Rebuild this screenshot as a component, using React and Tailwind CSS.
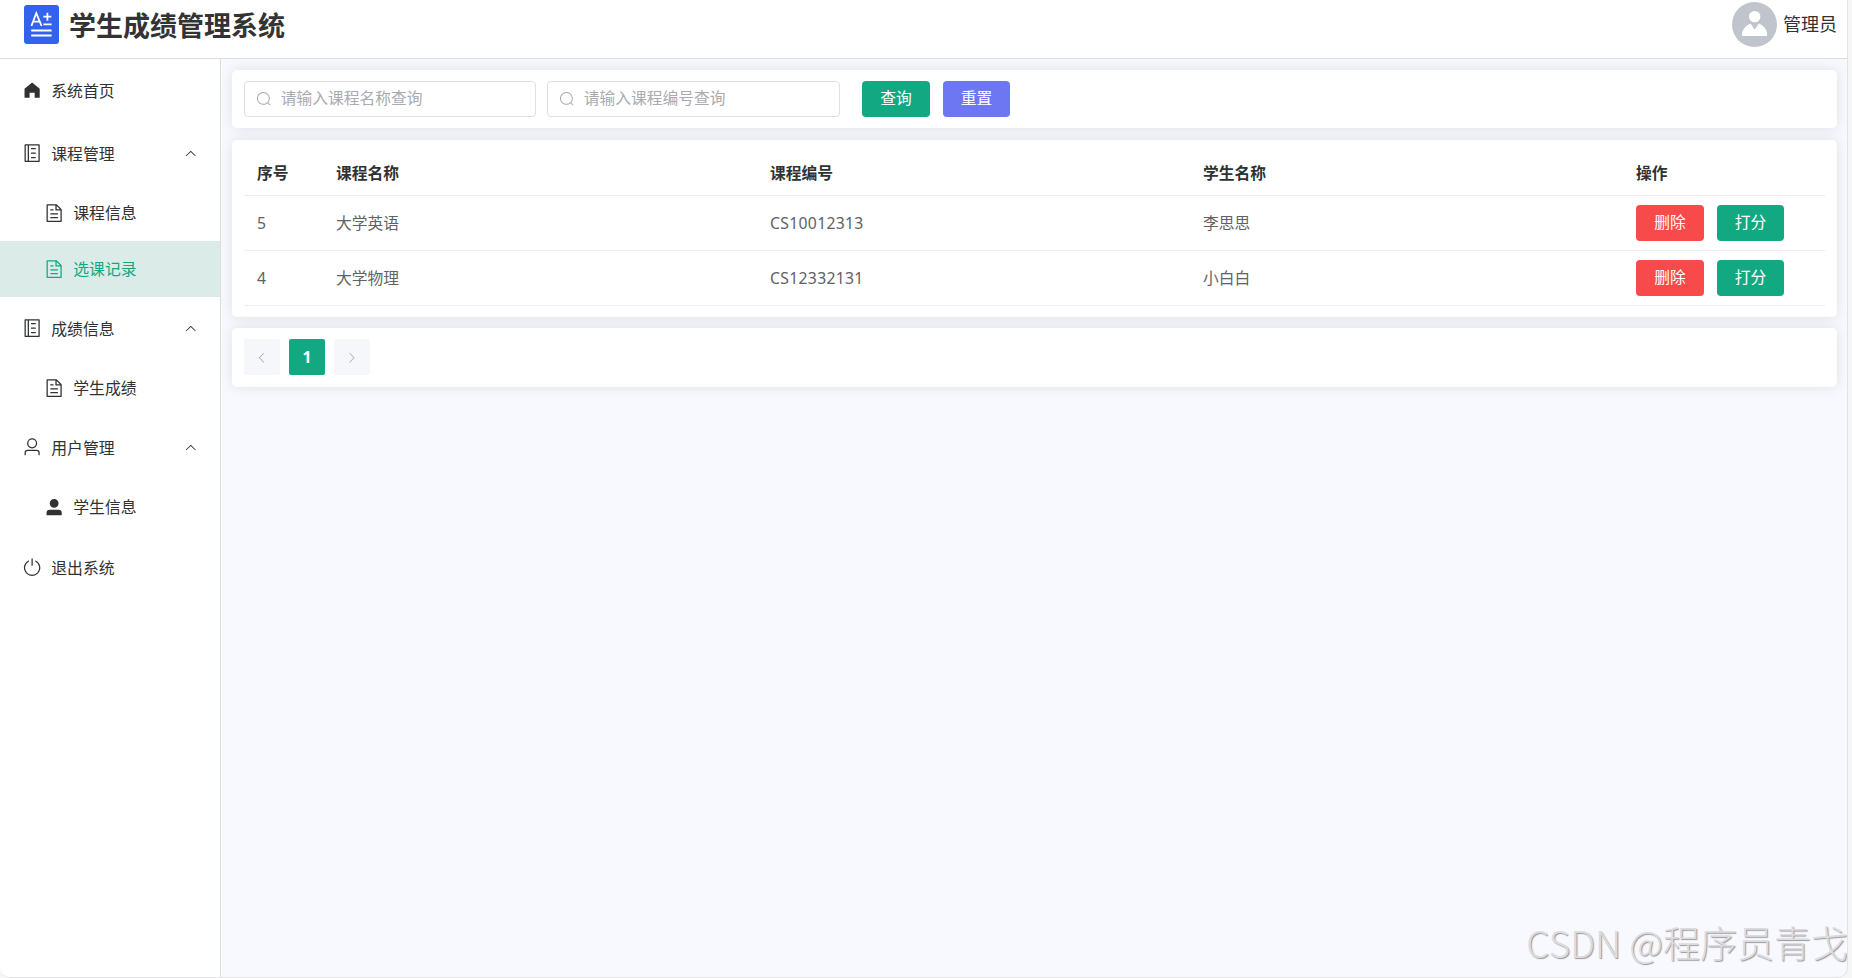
const ICONS = {
  home: ["M512 128 128 447.936V896h255.936V640H640v256h255.936V447.936z"],
  memo: [
    "M160 64h704a32 32 0 0 1 32 32v832a32 32 0 0 1-32 32H160a32 32 0 0 1-32-32V96a32 32 0 0 1 32-32zM192 896h96V128h-96v768zM352 896h480V128H352v768z",
    "M480 256h192a32 32 0 0 1 0 64H480a32 32 0 0 1 0-64zM480 480h192a32 32 0 0 1 0 64H480a32 32 0 0 1 0-64zM480 704h192a32 32 0 0 1 0 64H480a32 32 0 0 1 0-64z",
  ],
  doc: ["M832 384H576V128H192v768h640V384zm-26.496-64L640 154.496V320h165.504zM160 64h480l256 256v608a32 32 0 0 1-32 32H160a32 32 0 0 1-32-32V96a32 32 0 0 1 32-32zm160 448h384v64H320v-64zm0-192h160v64H320v-64zm0 384h384v64H320v-64z"],
  user: ["M512 512a192 192 0 1 0 0-384 192 192 0 0 0 0 384zm0 64a256 256 0 1 1 0-512 256 256 0 0 1 0 512zm320 320v-96a96 96 0 0 0-96-96H288a96 96 0 0 0-96 96v96a32 32 0 1 1-64 0v-96a160 160 0 0 1 160-160h448a160 160 0 0 1 160 160v96a32 32 0 1 1-64 0z"],
  userFilled: ["M288 320a224 224 0 1 0 448 0 224 224 0 1 0-448 0zm544 608H160a32 32 0 0 1-32-32v-96a160 160 0 0 1 160-160h448a160 160 0 0 1 160 160v96a32 32 0 0 1-32 32z"],
  power: [
    "M352 159.872V230.4a352 352 0 1 0 320 0v-70.528A416.128 416.128 0 0 1 512 960a416 416 0 0 1-160-800.128z",
    "M512 64q32 0 32 32v320q0 32-32 32t-32-32V96q0-32 32-32z",
  ],
  search: ["m795.904 750.72 124.992 124.928a32 32 0 0 1-45.248 45.248L750.656 795.904a416 416 0 1 1 45.248-45.248zM480 832a352 352 0 1 0 0-704 352 352 0 0 0 0 704z"],
  arrow: ["M831.872 340.864 512 652.672 192.128 340.864a30.592 30.592 0 0 0-42.752 0 29.12 29.12 0 0 0 0 41.6L489.664 714.24a32 32 0 0 0 44.672 0l340.288-331.712a29.12 29.12 0 0 0 0-41.728 30.592 30.592 0 0 0-42.752 0z"],
};

function Icon({ name, className, rule = "nonzero" }) {
  return (
    <svg viewBox="0 0 1024 1024" fill="currentColor" fillRule={rule} className={`shrink-0 ${className}`}>
      {ICONS[name].map((d) => (
        <path key={d} d={d} />
      ))}
    </svg>
  );
}

const MENU = [
  { label: "系统首页", icon: "home", height: "h-[63px]" },
  { label: "课程管理", icon: "memo", height: "h-[63px]", open: true },
  { label: "课程信息", icon: "doc", height: "h-[56px]", sub: true },
  { label: "选课记录", icon: "doc", height: "h-[56px]", sub: true, active: true },
  { label: "成绩信息", icon: "memo", height: "h-[63px]", open: true },
  { label: "学生成绩", icon: "doc", height: "h-[56px]", sub: true },
  { label: "用户管理", icon: "user", height: "h-[63px]", open: true },
  { label: "学生信息", icon: "userFilled", height: "h-[56px]", sub: true },
  { label: "退出系统", icon: "power", height: "h-[65px]" },
];

function MenuItem({ item }) {
  return (
    <li
      className={`flex items-center pr-[23px] ${item.height} ${item.sub ? "pl-[44px]" : "pl-[22px]"} ${
        item.active ? "bg-[#dbece8] text-[#12a882]" : "text-[#303133]"
      }`}
    >
      <Icon name={item.icon} rule="evenodd" className={`size-[20.25px] ${item.sub ? "mt-px" : "mb-px"}`} />
      <span className="ml-[9px] flex-1 pt-[2px] text-[15.85px]">{item.label}</span>
      {item.open && <Icon name="arrow" className="size-[13.5px] rotate-180" />}
    </li>
  );
}

function Card({ className, children }) {
  return (
    <section className={`rounded-[5px] bg-white px-3 shadow-[0_0_14px_rgba(0,0,0,0.1)] ${className}`}>{children}</section>
  );
}

function SearchInput({ placeholder, className }) {
  return (
    <label className={`flex h-9 items-center rounded-[4px] border border-[#dcdfe6] bg-white pl-[11px] ${className}`}>
      <Icon name="search" className="size-[15.75px] text-[#a8abb2]" />
      <input
        placeholder={placeholder}
        className="ml-[9px] min-w-0 flex-1 text-[15.75px] outline-none placeholder:text-[#a8abb2]"
      />
    </label>
  );
}

function Button({ className, children }) {
  return (
    <button className={`flex h-9 items-center justify-center rounded-[4px] text-[15.75px] text-white ${className}`}>
      {children}
    </button>
  );
}

const ROWS = [
  { id: 5, course: "大学英语", code: "CS10012313", student: "李思思" },
  { id: 4, course: "大学物理", code: "CS12332131", student: "小白白" },
];

const GRID = "grid grid-cols-[79px_434px_433px_433px_1fr] items-center border-b border-[#ebeef5]";

export default function App() {
  return (
    <div className="flex h-[978px] w-[1852px] overflow-hidden bg-[#f6f6f6] font-['Noto_Sans','Noto_Sans_CJK_SC',sans-serif]">
      <div className="relative flex h-[978px] w-[1848px] flex-col overflow-hidden rounded-b-[10px] border-r border-b border-[#e4e4e7] bg-[#f8f9ff]">
        <header className="flex h-[59px] shrink-0 items-center justify-between border-b border-[#dcdde0] bg-white pr-[10px] pl-6">
          <div className="flex items-center pb-[9px]">
            <svg viewBox="0 0 35 39" className="h-[39px] w-[35px]">
              <rect width="35" height="39" rx="3" fill="#3262ee" />
              <g stroke="#fff" fill="none" strokeWidth="1.8">
                <path d="M7.4 21 12.3 8.2 17.6 21M9.2 16.6h6.6" />
                <path d="M19.4 11.7h8M23.4 7.8v8M19.4 19.3h8.2" />
                <path d="M7.2 25.4h20.4M7.2 30.6h20.4" strokeWidth="2" />
              </g>
            </svg>
            <h1 className="ml-[10px] pt-[2px] text-[27px] leading-[37px] font-bold text-[#333]">学生成绩管理系统</h1>
          </div>
          <div className="flex items-center pb-[9px]">
            <svg viewBox="0 0 45 45" className="size-[45px]">
              <circle cx="22.5" cy="22.5" r="22.5" fill="#c0c4cc" />
              <circle cx="22.7" cy="14.6" r="5.7" fill="#fff" />
              <path d="M10 34V31Q11.500 24.500 18.500 21.500L22.700 27.800 27 21.500Q34 24.500 35 31V34Z" fill="#fff" />
            </svg>
            <span className="ml-1.5 text-[18px] text-[#303133]">管理员</span>
          </div>
        </header>
        <div className="flex min-h-0 flex-1">
          <nav className="w-[221px] shrink-0 border-r border-[#dcdde0] bg-white">
            <ul>
              {MENU.map((item) => (
                <MenuItem key={item.label} item={item} />
              ))}
            </ul>
          </nav>
          <main className="flex flex-1 flex-col overflow-hidden pt-[11px] pr-[10px] pl-[11px]">
            <Card className="flex h-[58px] items-center">
              <SearchInput placeholder="请输入课程名称查询" className="w-[292px]" />
              <SearchInput placeholder="请输入课程编号查询" className="ml-[11px] w-[293px]" />
              <Button className="ml-[22px] w-[68px] bg-[#12a882]">查询</Button>
              <Button className="ml-[13px] w-[67px] bg-[#6e77f2]">重置</Button>
            </Card>
            <Card className="mt-3 h-[177px] pt-[11px]">
              <div className={`${GRID} h-[45px] pt-px pl-[13px] text-[15.75px] font-bold text-[#303133]`}>
                <span>序号</span>
                <span>课程名称</span>
                <span>课程编号</span>
                <span>学生名称</span>
                <span>操作</span>
              </div>
              {ROWS.map((row) => (
                <div key={row.id} className={`${GRID} h-[55px] pl-[13px] text-[15.75px] text-[#606266]`}>
                  <span className="pt-[2px]">{row.id}</span>
                  <span className="pt-[2px]">{row.course}</span>
                  <span className="pt-[2px] tracking-[0.3px]">{row.code}</span>
                  <span className="pt-[2px]">{row.student}</span>
                  <div className="flex">
                    <Button className="w-[68px] bg-[#f84a4a]">删除</Button>
                    <Button className="ml-[13px] w-[67px] bg-[#12a882]">打分</Button>
                  </div>
                </div>
              ))}
            </Card>
            <Card className="mt-[11px] flex h-[59px] items-center gap-[9px] pb-px text-[15.75px]">
              <span className="flex size-9 items-center justify-center rounded-[2px] bg-[#f5f7fb] text-[#a8abb2]">
                <Icon name="arrow" className="mt-px mr-px size-[13.5px] rotate-90" />
              </span>
              <span className="flex size-9 items-center justify-center rounded-[2px] bg-[#12a882] pt-px font-bold text-white">
                1
              </span>
              <span className="flex size-9 items-center justify-center rounded-[2px] bg-[#f5f7fb] text-[#a8abb2]">
                <Icon name="arrow" className="mt-px size-[13.5px] -rotate-90" />
              </span>
            </Card>
          </main>
        </div>
        <div className="absolute right-[-1px] bottom-[7px] text-[37px] leading-[56px] font-light whitespace-nowrap text-[#dcdce0] [text-shadow:1px_1px_1px_#999] font-['Noto_Sans_CJK_SC',sans-serif]">
          CSDN @程序员青戈
        </div>
      </div>
    </div>
  );
}
